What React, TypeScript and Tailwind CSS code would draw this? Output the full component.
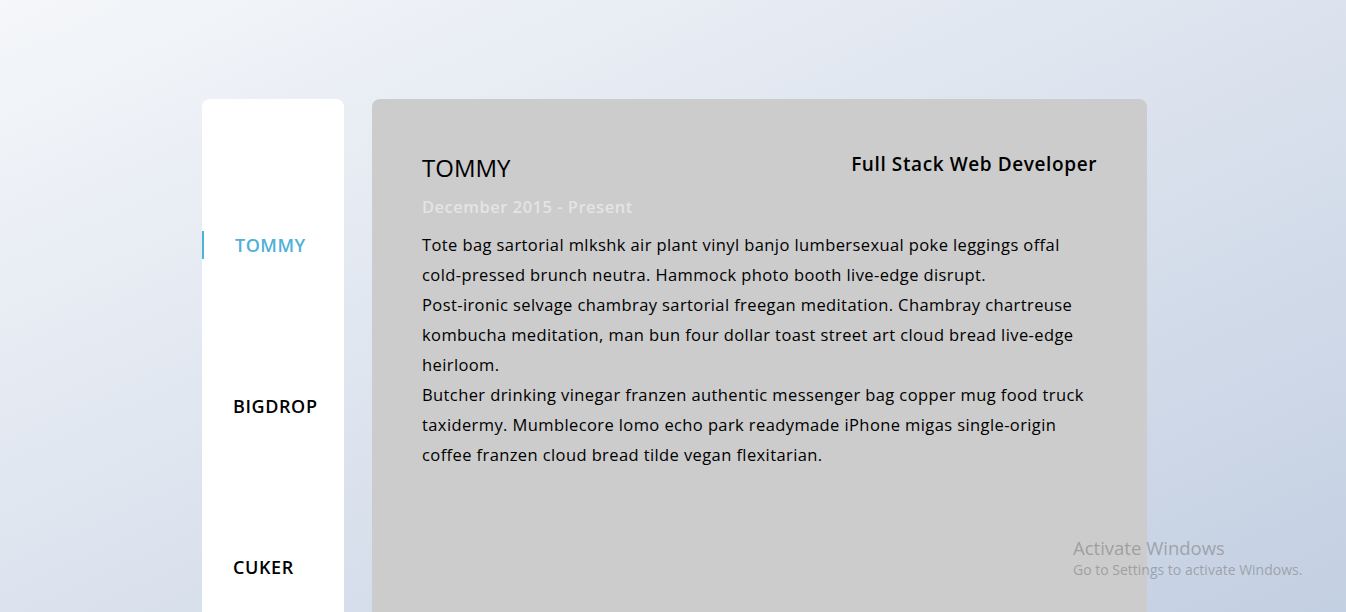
import React, { useState } from 'react';

const jobs = [
  {
    name: 'TOMMY',
    title: 'Full Stack Web Developer',
    date: 'December 2015 - Present',
    text: [
      'Tote bag sartorial mlkshk air plant vinyl banjo lumbersexual poke leggings offal cold-pressed brunch neutra. Hammock photo booth live-edge disrupt.',
      'Post-ironic selvage chambray sartorial freegan meditation. Chambray chartreuse kombucha meditation, man bun four dollar toast street art cloud bread live-edge heirloom.',
      'Butcher drinking vinegar franzen authentic messenger bag copper mug food truck taxidermy. Mumblecore lomo echo park readymade iPhone migas single-origin coffee franzen cloud bread tilde vegan flexitarian.',
    ],
  },
  { name: 'BIGDROP', title: '', date: '', text: [] },
  { name: 'CUKER', title: '', date: '', text: [] },
];

export default function App() {
  const [active, setActive] = useState(0);
  const job = jobs[active];

  return (
    <div
      className="min-h-screen w-full bg-gradient-to-br from-[#f5f7fa] to-[#c3cfe2] overflow-hidden relative"
      style={{ fontFamily: '"Open Sans", "Noto Sans", sans-serif' }}
    >
      <div className="ml-[202px] w-[945px] pt-[99px] flex gap-[28px] h-[612px]">
        {/* Sidebar */}
        <div className="w-[142px] shrink-0 bg-white rounded-t-lg pt-[132px] flex flex-col gap-[133px]">
          {jobs.map((j, i) => (
            <button
              key={j.name}
              onClick={() => setActive(i)}
              className={
                i === active
                  ? 'h-[28px] text-left text-[18px] leading-[28px] font-semibold tracking-[0.5px] border-l-2 border-[#4fb0d8] pl-[31px] text-[#4fb0d8]'
                  : 'h-[28px] text-left text-[18px] leading-[28px] font-semibold tracking-[0.6px] pl-[31px] text-black'
              }
            >
              {j.name}
            </button>
          ))}
        </div>

        {/* Content */}
        <div className="flex-1 bg-[#cccccc] rounded-t-lg pt-[51px] px-[50px]">
          <div className="flex justify-between items-start">
            <h2 className="text-[24px] leading-[36px] font-medium text-black">{job.name}</h2>
            <h3 className="text-[19px] leading-[28px] font-semibold tracking-[0.6px] text-black">{job.title}</h3>
          </div>
          <p className="mt-[9px] text-[16.5px] leading-[24px] font-semibold tracking-[0.5px] text-[#e4e4e4]">{job.date}</p>
          <div className="mt-[11px] text-[16.5px] leading-[30px] tracking-[0.4px] text-black">
            {job.text.map((t) => (
              <p key={t.slice(0, 12)}>{t}</p>
            ))}
          </div>
        </div>
      </div>

      {/* Windows watermark */}
      <div
        className="absolute left-[1073px] top-[536px] text-[rgba(120,120,120,0.55)] pointer-events-none"
        style={{ fontFamily: '"Open Sans", sans-serif' }}
      >
        <div className="text-[18.5px] leading-[24px]">Activate Windows</div>
        <div className="text-[14px] leading-[20px]">Go to Settings to activate Windows.</div>
      </div>
    </div>
  );
}
